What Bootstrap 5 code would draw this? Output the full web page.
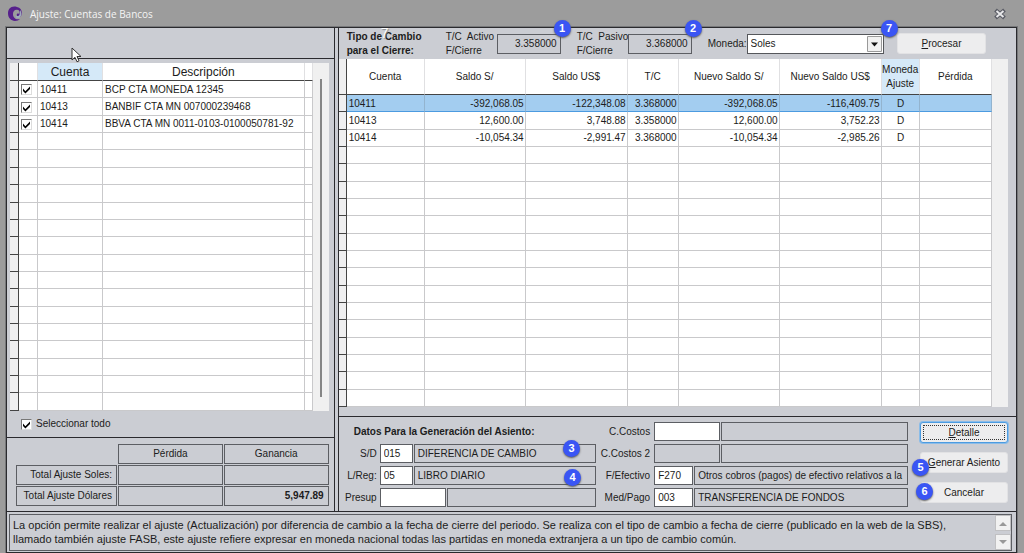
<!DOCTYPE html>
<html lang="es">
<head>
<meta charset="utf-8">
<meta name="viewport" content="width=device-width, initial-scale=1">
<title>Ajuste: Cuentas de Bancos</title>
<link href="https://cdn.jsdelivr.net/npm/bootstrap@5.3.0/dist/css/bootstrap.min.css" rel="stylesheet">
<style>
:root{--panel:#cbcdd3;--ink:#2a2a2e;--edge:#5c5e63;--rule:#c9c9cb}
body{background:#9c9c9c;font-family:"Liberation Sans",Arial,sans-serif;font-size:10px;line-height:14px;color:#1c1c20}
button,input,select,textarea{font-family:inherit;font-size:10px;line-height:14px;color:#1c1c20}
.title-bar{height:27px;padding:0 18px 0 8px}
.title-text{font-family:"Open Sans","Noto Sans",sans-serif;font-size:10px;color:#f4f4f4;font-weight:400}
.close-btn{background:none;border:0;padding:0;line-height:0}
.app-frame{margin:0 7px 1px 6px;border:1px solid var(--ink);background:var(--panel);box-shadow:0 0 0 1px #77787a}
.work-area{display:grid;grid-template-columns:328fr 679fr;column-gap:3px}
.pane-left{border-right:1px solid var(--ink)}
.pane-right{border-left:1px solid var(--ink)}
.bar-top{height:31px}
.rule-b{border-bottom:1px solid var(--ink)}
.accounts-box{margin:4px 5px 0 3px}
.select-all{min-height:27px}
.grid-gap{min-height:9px}
.data-grid{table-layout:fixed;width:100%;background:#fff;border-collapse:separate;border-spacing:0}
.data-grid th,.data-grid td{border-right:1px solid var(--rule);border-bottom:1px solid var(--rule);padding:1px 1px 0 2px;line-height:14px;height:17px;white-space:nowrap;overflow:hidden;vertical-align:middle}
.data-grid thead th{font-weight:400;text-align:center;border-bottom:1px solid #444;padding:0;white-space:normal;border-right-color:#e0e0e2}
.data-grid tr>:first-child{background:#efeff0;border-right:1px solid #444;border-bottom-color:#444}
.data-grid .hot{background:#d5e9f8}
.grid-left,.grid-right{height:348px}
.grid-left thead th{font-size:12px;height:18px}
.grid-right thead th{height:36px}
.grid-right tbody td{text-align:right}
.grid-right tbody td:nth-child(2){text-align:left}
.grid-right tbody td:nth-child(8){text-align:center}
.grid-right .picked td:not(:first-child){background:#a3cdf0;border-bottom:1px solid #4c9be0;border-right-color:#93b4cf}
.scroll-track{width:16px;background:#f0f0f0}
.scroll-thumb{width:2px;background:#858585;margin:16px auto 14px 7px}
.tick{appearance:none;width:11px;height:11px;margin:0;background:#fff;border:1px solid #777;border-right-color:#ddd;border-bottom-color:#ddd;display:block;flex:none}
.tick:checked{background:#fff url("data:image/svg+xml,%3Csvg xmlns='http://www.w3.org/2000/svg' viewBox='0 0 9 9'%3E%3Cpath d='M1 3.6 3.4 6.2 8 1.5v2.4L3.4 8.4 1 6z' fill='%23000'/%3E%3C/svg%3E") center/9px 9px no-repeat}
.check-all{margin:0 4px 0 14px}
.totals-box{padding:5px 4px 4px 8px}
.totals{border-collapse:separate;border-spacing:1px;table-layout:fixed;width:100%}
.totals th,.totals td{height:20px;border:1px solid var(--edge);font-weight:400;padding:0 4px;vertical-align:middle}
.totals .bare{border:0}
.entry-form{padding:5px 8px 4px 3px}
.field{height:19px;border:1px solid var(--edge);border-radius:0;background:#fff;padding:0 3px;min-width:0}
.field.locked{background:var(--panel)}
.w-code{width:33px}.w-code-m{width:39px}.w-code-l{width:66px}
.rate{width:64px;height:20px;text-align:right}
.rate-label{width:51px;white-space:pre}
.form-line{display:flex;align-items:center;gap:1px;height:19px}
.form-line label{text-align:right;padding-right:2px;flex:none;white-space:nowrap}
.lines{display:flex;flex-direction:column;gap:3px}
.set-a{flex:253}.set-a label{width:37px}
.set-b{flex:306}.set-b label{width:53px;padding-right:3px}
.actions{width:92px;gap:9px}
.win-btn{background:#ededee;border:1px solid #e2e2e4;border-radius:3px;height:21px;padding:0;width:100%;display:block}
.win-btn.focused{border:1px solid #4c9be0;outline:1px dotted #333;outline-offset:-4px;box-shadow:0 0 0 1px #8abce8}
.run-btn{width:89px;margin-right:30px}
.combo{position:relative;width:137px}
.combo select{appearance:none;width:100%;height:20px;border:1px solid #55575b;border-radius:0;background:#fff;padding:0 3px;display:block}
.combo svg{position:absolute;right:2px;top:2px;pointer-events:none}
.pin{position:absolute;width:17px;height:17px;border-radius:50%;background:#3a55f4;color:#fff;font-weight:700;font-size:11px;line-height:17px;text-align:center;box-shadow:0 1px 2px #555}
.ghost{position:absolute;color:#fff;font-size:14px;left:42px;top:-2px;z-index:1;text-shadow:1px 1px 1px #888}
.pointer{position:absolute;left:64px;top:19px;z-index:2}
.hint{border:1px solid var(--edge);margin:2px 4px 1px 2px}
.hint textarea{border:0;background:transparent;resize:none;overflow:hidden;font-size:11px;line-height:14px;padding:3px 8px 0 3px;height:35px}
.spin{border:1px solid #c0c0c2;background:#f1f1f1;width:16px;height:16px;padding:0;line-height:0}
</style>
</head>
<body>
<div class="d-flex flex-column min-vh-100">
<header class="title-bar d-flex align-items-center">
  <svg width="14" height="15" viewBox="0 0 14 15" class="me-2"><path d="M9 1C3-.6 0 3 0 7.600 0 12 3 15 7 15c2 0 4-1 5-2-4 1-7-1-7-5 0-3 2-5 5-4 2 .6 2 3 1 4-1-1-3 0-2 2 1 1.500 4 1 4.500-1C14.500 5 13 2 9 1z" fill="#57208c"/><path d="M12 4c2 3 2 6-1 8-2 1-4-1-3-3 0 1.500 3 1.500 3.500-.5.4-1.500.7-3 .5-4.500z" fill="#9fa9bd"/></svg>
  <h1 class="title-text m-0 flex-grow-1">Ajuste: Cuentas de Bancos</h1>
  <button class="close-btn" aria-label="Cerrar"><svg width="12" height="12" viewBox="0 0 12 12"><path d="M1.500 2l9 8m0-8l-9 8" stroke="#5b5d66" stroke-width="4"/><path d="M2.500 3l7 6m0-6l-7 6" stroke="#e8e8ea" stroke-width="2"/></svg></button>
</header>

<div class="app-frame">
<main class="work-area rule-b">
  <section class="pane-left d-flex flex-column">
    <div class="bar-top rule-b position-relative">
      <svg class="pointer" width="11" height="16" viewBox="0 0 11 16"><path d="M1 1v12l3-2.700 2 4.500 2-1-2-4.300h4z" fill="#fff" stroke="#333" stroke-width="1"/></svg>
    </div>
    <div class="accounts-box d-flex">
      <table class="data-grid grid-left">
        <colgroup><col style="width:9px"><col style="width:19px"><col style="width:65px"><col><col style="width:8px"></colgroup>
        <thead><tr><th></th><th></th><th class="hot">Cuenta</th><th>Descripción</th><th></th></tr></thead>
        <tbody id="accounts">
          <tr><td></td><td><input type="checkbox" class="tick" aria-label="10411" checked></td><td>10411</td><td>BCP CTA MONEDA 12345</td><td></td></tr>
          <tr><td></td><td><input type="checkbox" class="tick" aria-label="10413" checked></td><td>10413</td><td>BANBIF CTA MN 007000239468</td><td></td></tr>
          <tr><td></td><td><input type="checkbox" class="tick" aria-label="10414" checked></td><td>10414</td><td>BBVA CTA MN 0011-0103-0100050781-92</td><td></td></tr>
        </tbody>
      </table>
      <div class="scroll-track d-flex flex-shrink-0"><div class="scroll-thumb"></div></div>
    </div>
    <div class="select-all d-flex align-items-center rule-b flex-grow-1">
      <input type="checkbox" class="tick check-all" id="todo" checked><label for="todo">Seleccionar todo</label>
    </div>
    <div class="totals-box">
      <table class="totals">
        <colgroup><col style="width:101px"><col><col></colgroup>
        <tr><td class="bare"></td><th class="text-center">Pérdida</th><th class="text-center">Ganancia</th></tr>
        <tr><th class="text-end">Total Ajuste Soles:</th><td></td><td></td></tr>
        <tr><th class="text-end">Total Ajuste Dólares</th><td></td><td class="text-end fw-bold">5,947.89</td></tr>
      </table>
    </div>
  </section>

  <section class="pane-right d-flex flex-column">
    <div class="bar-top d-flex align-items-center position-relative ps-2">
      <div class="fw-bold text-nowrap" style="width:99px">Tipo de Cambio<br>para el Cierre:</div>
      <span class="ghost">7</span>
      <label for="activo" class="rate-label">T/C  Activo
F/Cierre</label>
      <div class="position-relative"><input id="activo" class="field locked rate" value="3.358000" readonly><span class="pin" style="right:-10px;top:-14px">1</span></div>
      <label for="pasivo" class="rate-label ms-3">T/C  Pasivo
F/Cierre</label>
      <div class="position-relative"><input id="pasivo" class="field locked rate" value="3.368000" readonly><span class="pin" style="right:-10px;top:-14px">2</span></div>
      <label for="moneda" class="ms-3">Moneda:</label>
      <div class="combo"><select id="moneda"><option>Soles</option></select>
        <svg width="15" height="16" viewBox="0 0 15 16"><path d="M.5.500h14v15H.5z" fill="#f1f1f1" stroke="#999"/><path d="M4 6.500h7L7.500 10.500z" fill="#111"/></svg>
        <span class="pin" style="right:-14px;top:-14px">7</span></div>
      <button class="win-btn run-btn ms-auto"><u>P</u>rocesar</button>
    </div>
    <div class="d-flex me-2">
      <table class="data-grid grid-right">
        <colgroup><col style="width:8px"><col style="width:78px"><col style="width:101px"><col style="width:102px"><col style="width:51px"><col style="width:101px"><col style="width:102px"><col style="width:38px"><col></colgroup>
        <thead><tr><th></th><th>Cuenta</th><th>Saldo S/</th><th>Saldo US$</th><th>T/C</th><th>Nuevo Saldo S/</th><th>Nuevo Saldo US$</th><th class="hot">Moneda Ajuste</th><th>Pérdida</th></tr></thead>
        <tbody id="balances">
          <tr class="picked"><td></td><td>10411</td><td>-392,068.05</td><td>-122,348.08</td><td>3.368000</td><td>-392,068.05</td><td>-116,409.75</td><td>D</td><td></td></tr>
          <tr><td></td><td>10413</td><td>12,600.00</td><td>3,748.88</td><td>3.358000</td><td>12,600.00</td><td>3,752.23</td><td>D</td><td></td></tr>
          <tr><td></td><td>10414</td><td>-10,054.34</td><td>-2,991.47</td><td>3.368000</td><td>-10,054.34</td><td>-2,985.26</td><td>D</td><td></td></tr>
        </tbody>
      </table>
      <div class="scroll-track flex-shrink-0"></div>
    </div>
    <div class="grid-gap rule-b flex-grow-1"></div>
    <form class="entry-form d-flex position-relative" onsubmit="return false">
      <div class="lines set-a">
        <div class="form-line fw-bold ps-2 ms-1">Datos Para la Generación del Asiento:</div>
        <div class="form-line position-relative"><label for="sd">S/D</label><input id="sd" class="field w-code" value="015"><input class="field locked flex-fill" aria-label="Subdiario" value="DIFERENCIA DE CAMBIO" readonly><span class="pin" style="right:16px;top:-4px">3</span></div>
        <div class="form-line position-relative"><label for="lreg">L/Reg:</label><input id="lreg" class="field w-code" value="05"><input class="field locked flex-fill" aria-label="Libro" value="LIBRO DIARIO" readonly><span class="pin" style="right:15px;top:3px">4</span></div>
        <div class="form-line"><label for="pre">Presup</label><input id="pre" class="field w-code-l"><input class="field locked flex-fill" aria-label="Presupuesto" readonly></div>
      </div>
      <div class="lines set-b ms-1">
        <div class="form-line"><label for="cc">C.Costos</label><input id="cc" class="field w-code-l"><input class="field locked flex-fill" aria-label="Centro de costos" readonly></div>
        <div class="form-line"><label for="cc2">C.Costos 2</label><input id="cc2" class="field locked w-code-l" readonly><input class="field locked flex-fill" aria-label="Centro de costos 2" readonly></div>
        <div class="form-line"><label for="fe">F/Efectivo</label><input id="fe" class="field w-code-m" value="F270"><input class="field locked flex-fill" aria-label="Flujo de efectivo" value="Otros cobros (pagos) de efectivo relativos a la" readonly></div>
        <div class="form-line"><label for="mp">Med/Pago</label><input id="mp" class="field w-code-m" value="003"><input class="field locked flex-fill" aria-label="Medio de pago" value="TRANSFERENCIA DE FONDOS" readonly></div>
      </div>
      <div class="actions d-flex flex-column ms-2 flex-shrink-0 ps-1">
        <button class="win-btn focused"><u>D</u>etalle</button>
        <div class="position-relative"><button class="win-btn"><u>G</u>enerar Asiento</button><span class="pin" style="left:-8px;top:7px">5</span></div>
        <div class="position-relative"><button class="win-btn">Cancelar</button><span class="pin" style="left:-4px;top:1px">6</span></div>
      </div>
    </form>
  </section>
</main>
<footer class="hint d-flex">
  <textarea class="flex-grow-1" aria-label="Ayuda" readonly>La opción permite realizar el ajuste (Actualización) por diferencia de cambio a la fecha de cierre del periodo. Se realiza con el tipo de cambio a fecha de cierre (publicado en la web de la SBS), llamado también ajuste FASB, este ajuste refiere expresar en moneda nacional todas las partidas en moneda extranjera a un tipo de cambio común.</textarea>
  <div class="d-flex flex-column justify-content-between">
    <button class="spin" aria-label="Subir"><svg width="8" height="5"><path d="M0 5l4-4 4 4z" fill="#999"/></svg></button>
    <button class="spin" aria-label="Bajar"><svg width="8" height="5"><path d="M0 0l4 4 4-4z" fill="#999"/></svg></button>
  </div>
</footer>
</div>
</div>
<script>
function padRows(id, total, cells) {
  const body = document.getElementById(id);
  while (body.rows.length < total) {
    const row = body.insertRow();
    for (let i = 0; i < cells; i++) row.insertCell();
  }
}
padRows('accounts', 19, 5);
padRows('balances', 18, 9);
</script>
<script src="https://cdn.jsdelivr.net/npm/bootstrap@5.3.0/dist/js/bootstrap.bundle.min.js"></script>
</body>
</html>
